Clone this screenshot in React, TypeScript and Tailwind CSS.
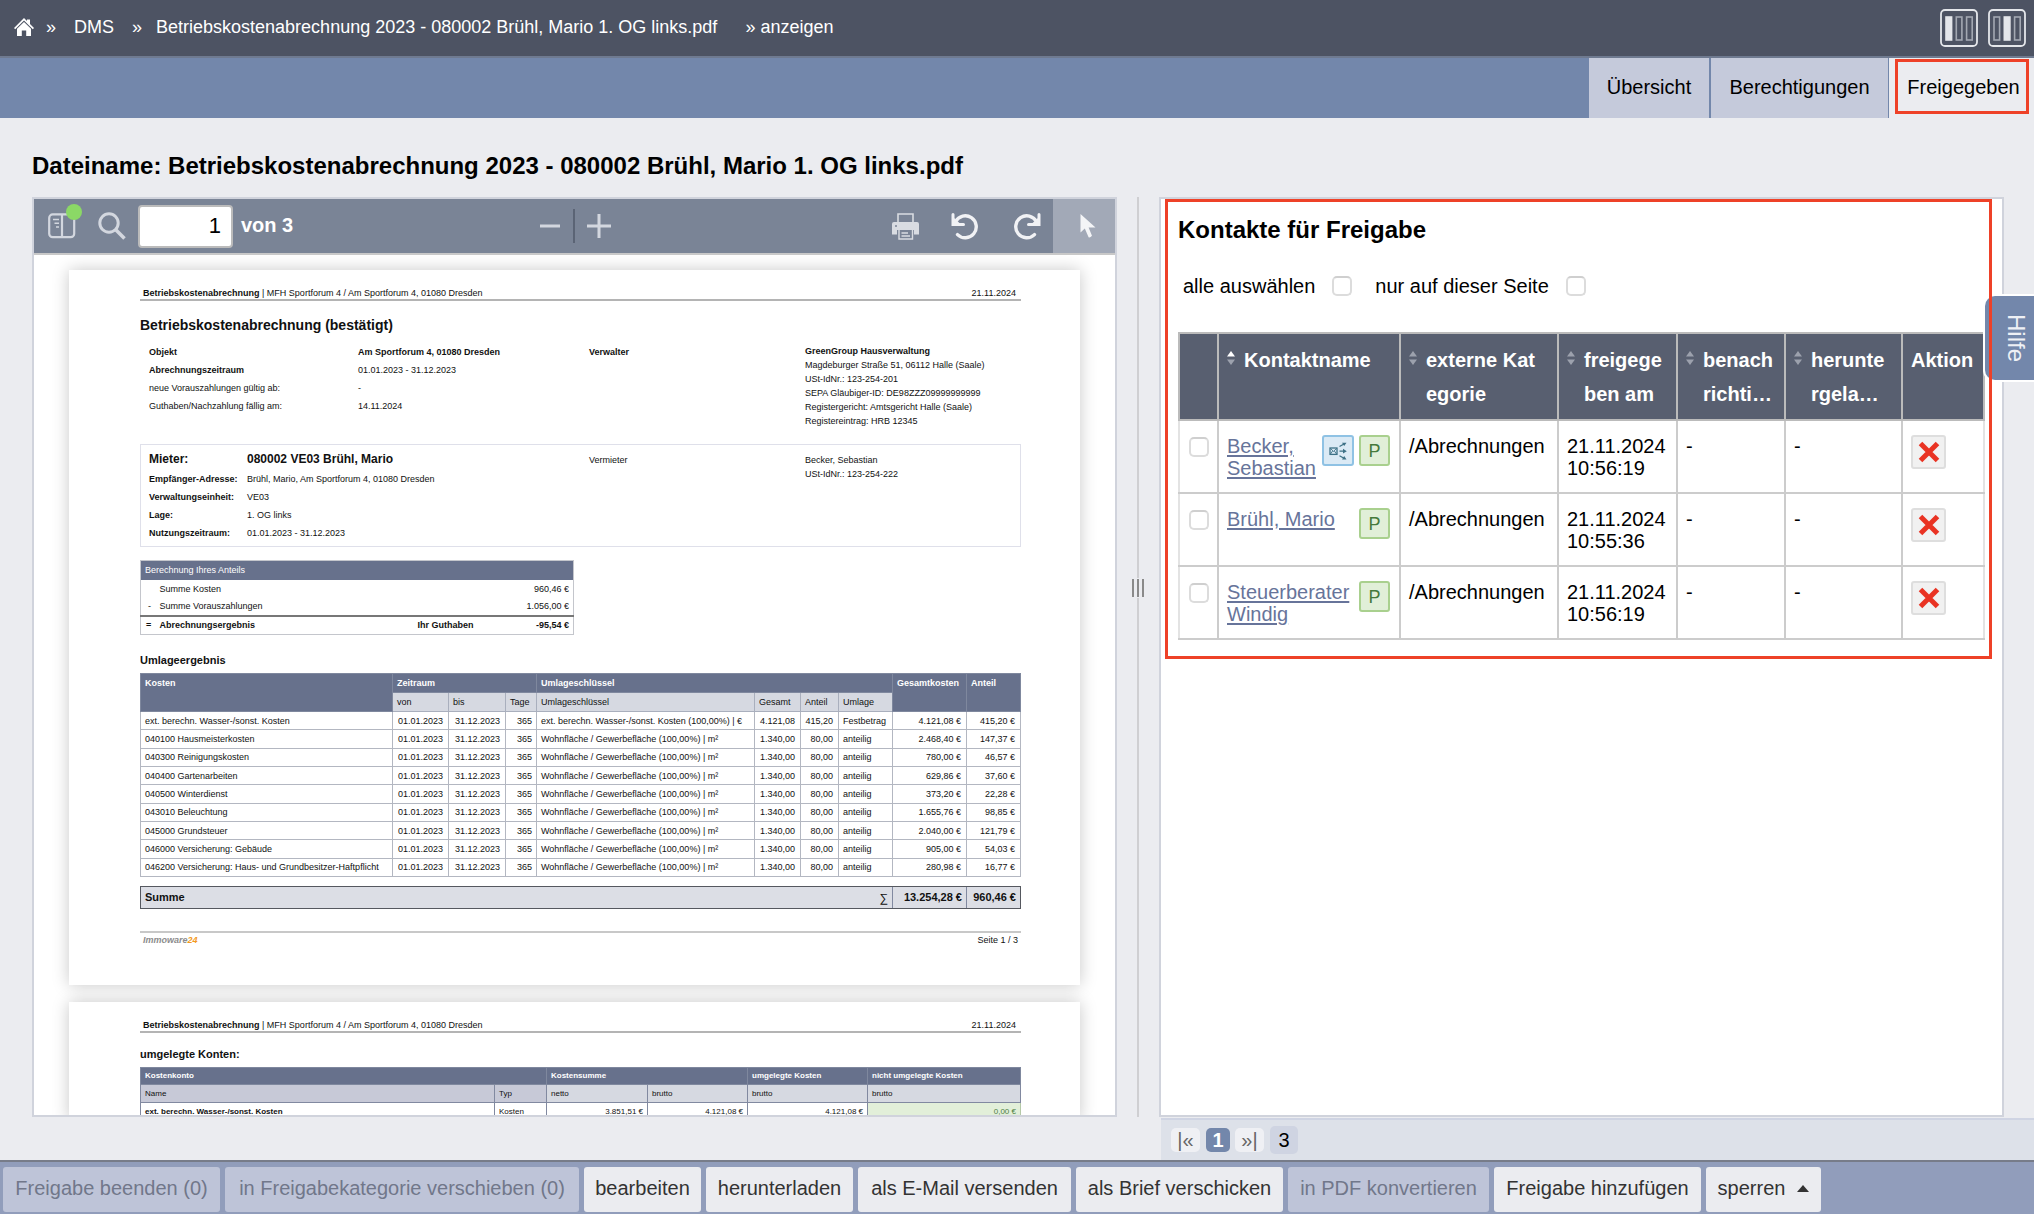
import { useState } from 'react';
import type { ReactNode } from 'react';
import clsx from 'clsx';

interface CostRow {
  name: string;
  key: string;
  total: string;
  share: string;
  mode: string;
  sum: string;
  part: string;
}

interface Contact {
  id: string;
  name: string;
  mail?: boolean;
  category: string;
  date: string;
  time: string;
}

const AREA_KEY = 'Wohnfläche / Gewerbefläche (100,00%) | m²';

const costRows: CostRow[] = [
  { name: 'ext. berechn. Wasser-/sonst. Kosten', key: 'ext. berechn. Wasser-/sonst. Kosten (100,00%) | €', total: '4.121,08', share: '415,20', mode: 'Festbetrag', sum: '4.121,08 €', part: '415,20 €' },
  { name: '040100 Hausmeisterkosten', key: AREA_KEY, total: '1.340,00', share: '80,00', mode: 'anteilig', sum: '2.468,40 €', part: '147,37 €' },
  { name: '040300 Reinigungskosten', key: AREA_KEY, total: '1.340,00', share: '80,00', mode: 'anteilig', sum: '780,00 €', part: '46,57 €' },
  { name: '040400 Gartenarbeiten', key: AREA_KEY, total: '1.340,00', share: '80,00', mode: 'anteilig', sum: '629,86 €', part: '37,60 €' },
  { name: '040500 Winterdienst', key: AREA_KEY, total: '1.340,00', share: '80,00', mode: 'anteilig', sum: '373,20 €', part: '22,28 €' },
  { name: '043010 Beleuchtung', key: AREA_KEY, total: '1.340,00', share: '80,00', mode: 'anteilig', sum: '1.655,76 €', part: '98,85 €' },
  { name: '045000 Grundsteuer', key: AREA_KEY, total: '1.340,00', share: '80,00', mode: 'anteilig', sum: '2.040,00 €', part: '121,79 €' },
  { name: '046000 Versicherung: Gebäude', key: AREA_KEY, total: '1.340,00', share: '80,00', mode: 'anteilig', sum: '905,00 €', part: '54,03 €' },
  { name: '046200 Versicherung: Haus- und Grundbesitzer-Haftpflicht', key: AREA_KEY, total: '1.340,00', share: '80,00', mode: 'anteilig', sum: '280,98 €', part: '16,77 €' },
];

const contacts: Contact[] = [
  { id: 'becker', name: 'Becker, Sebastian', mail: true, category: '/Abrechnungen', date: '21.11.2024', time: '10:56:19' },
  { id: 'bruehl', name: 'Brühl, Mario', category: '/Abrechnungen', date: '21.11.2024', time: '10:55:36' },
  { id: 'windig', name: 'Steuerberater Windig', category: '/Abrechnungen', date: '21.11.2024', time: '10:56:19' },
];

const sortableColumns = [
  { lines: ['Kontaktname'], active: true },
  { lines: ['externe Kat', 'egorie'] },
  { lines: ['freigege', 'ben am'] },
  { lines: ['benach', 'richti…'] },
  { lines: ['herunte', 'rgela…'] },
];

const actions = [
  { label: 'Freigabe beenden (0)', width: 'w-[217px]', disabled: true },
  { label: 'in Freigabekategorie verschieben (0)', width: 'w-[354px]', disabled: true },
  { label: 'bearbeiten', width: 'w-[117px]' },
  { label: 'herunterladen', width: 'w-[147px]' },
  { label: 'als E-Mail versenden', width: 'w-[213px]' },
  { label: 'als Brief verschicken', width: 'w-[207px]' },
  { label: 'in PDF konvertieren', width: 'w-[201px]', disabled: true },
  { label: 'Freigabe hinzufügen', width: 'w-[207px]' },
];

/* ---------- Icons ---------- */

function HomeIcon() {
  return (
    <svg viewBox="0 0 20 18" className="w-5 h-[18px]" fill="#fff">
      <path d="M10 0 L13 3 V1.6 H16 V6 L20 10 L18.8 11.2 L10 2.6 L1.2 11.2 L0 10 Z" />
      <path d="M10 4 L17 10.8 V18 H12.2 V12.5 H7.8 V18 H3 V10.8 Z" />
    </svg>
  );
}

function LayoutIcon({ active }: { active: number }) {
  return (
    <svg viewBox="0 0 38 38" className="w-[38px] h-[38px]">
      <rect x="1" y="1" width="36" height="36" rx="4" fill="none" stroke="#e4e6ea" strokeWidth="1.8" />
      {[0, 1, 2].map((i) => (
        <rect
          key={i}
          x={6 + i * 10.3}
          y="8"
          width="5.6"
          height="23"
          fill={i === active ? '#e4e6ea' : 'none'}
          stroke={i === active ? '#e4e6ea' : '#a3a8b2'}
          strokeWidth="1.6"
        />
      ))}
    </svg>
  );
}

function SidebarIcon() {
  return (
    <svg viewBox="0 0 28 26" className="w-7 h-[26px]" fill="none" stroke="#d3d7df" strokeWidth="2.2">
      <rect x="1.2" y="1.4" width="25" height="22.8" rx="3.5" />
      <path d="M14 1.4 V24" />
      <path d="M5 6.5 H11 M6.5 10.3 H11 M8 14 H11" strokeWidth="1.5" />
    </svg>
  );
}

function SearchIcon() {
  return (
    <svg viewBox="0 0 28 28" className="w-7 h-7" fill="none" stroke="#d3d7df">
      <circle cx="11" cy="11" r="9.2" strokeWidth="3" />
      <path d="M17.5 17.5 L26.5 26.5" strokeWidth="3.6" />
    </svg>
  );
}

function PrinterIcon() {
  return (
    <svg viewBox="0 0 27 27" className="w-[27px] h-[27px]">
      <path d="M6 9 V1 H21 V9" fill="none" stroke="#d9dce2" strokeWidth="1.6" />
      <path d="M2 9 H25 Q27 9 27 11 V21.5 H22 V17 H5 V21.5 H0 V11 Q0 9 2 9 Z" fill="#d9dce2" />
      <circle cx="4" cy="13" r="1" fill="#7a8496" />
      <path d="M7 17 V26 H20.5 V17" fill="none" stroke="#d9dce2" strokeWidth="1.4" />
      <path d="M9.5 20 H16 M9.5 23 H18" stroke="#d9dce2" strokeWidth="1.4" />
    </svg>
  );
}

function RotateIcon({ flip }: { flip?: boolean }) {
  return (
    <svg viewBox="0 0 27 27" className={clsx('w-[27px] h-[27px]', flip && '-scale-x-100')} fill="none" stroke="#f1f2f5">
      <path d="M4.6 8.5 A11 11 0 1 1 6.5 21.6" strokeWidth="3.4" strokeLinecap="round" />
      <path d="M2 1.5 V11.6 H12.5" strokeWidth="3" strokeLinecap="round" />
      <path d="M3 5 V10.5 H9 Z" fill="#f1f2f5" stroke="none" />
    </svg>
  );
}

function PointerIcon() {
  return (
    <svg viewBox="0 0 16 24" className="w-4 h-6" fill="#f4f5f7">
      <path d="M0.5 0 V18.5 L4.8 14.6 L8.6 23.2 Q10 24 12 21.8 L8.6 13.4 H15.5 Z" />
    </svg>
  );
}

function SortIcon({ active }: { active?: boolean }) {
  return (
    <svg viewBox="0 0 8 14" className="w-2 h-[14px] mt-2 shrink-0">
      <path d="M4 0 L8 5.5 H0 Z" fill={active ? '#fff' : '#9ca1ad'} />
      <path d="M0 8.5 H8 L4 14 Z" fill="#9ca1ad" />
    </svg>
  );
}

function DistributeIcon() {
  return (
    <svg viewBox="0 0 18 18" className="w-[18px] h-[18px]" fill="none" stroke="#3d7186" strokeWidth="1.3">
      <rect x="1" y="6" width="7" height="6.4" />
      <path d="M1.5 6.5 L4.5 9.4 L7.5 6.5 M1.5 12 L3.6 9 M7.5 12 L5.4 9" strokeWidth="0.9" />
      <path d="M10.5 4.5 L15 2 M10.5 9.2 H16 M10.5 13.8 L15 16.2" />
      <path d="M13 0.7 L17.5 0.7 L15.2 4 Z M14 6.8 L17.8 9.2 L14 11.6 Z M15.2 14 L17.5 17.6 L13 17.4 Z" fill="#3d7186" stroke="none" />
    </svg>
  );
}

function DeleteIcon() {
  return (
    <svg viewBox="0 0 22 22" className="w-[22px] h-[22px]">
      <path d="M2.5 2.5 L19.5 19.5 M19.5 2.5 L2.5 19.5" stroke="#e93323" strokeWidth="5" />
    </svg>
  );
}

/* ---------- Document preview ---------- */

function DocPage({ children }: { children: ReactNode }) {
  return (
    <article className="bg-white shadow-[0_0_16px_rgba(0,0,0,0.22)] pt-[17px] pl-[71px] pr-[59px]">
      <header className="flex justify-between pl-[3px] pr-[5px] text-[9px] leading-3 border-b-2 border-[#b4b4b4]">
        <p>
          <b>Betriebskostenabrechnung</b> | MFH Sportforum 4 / Am Sportforum 4, 01080 Dresden
        </p>
        <p>21.11.2024</p>
      </header>
      {children}
    </article>
  );
}

function StatementPage() {
  const dark = 'bg-[#67718c] text-white font-bold border border-[#7f889e]';
  const sub = 'bg-[#d6d9e1] font-normal border border-[#a9afbd]';
  const cell = 'border border-[#b3b7c1] pl-1 pr-[5px]';

  return (
    <DocPage>
      <h3 className="mt-[15px] text-sm leading-[18px] font-bold">Betriebskostenabrechnung (bestätigt)</h3>

      <div className="mt-[9px] grid grid-cols-[449px_216px_1fr] leading-[18px]">
        <dl className="grid grid-cols-[209px_1fr] pl-[9px] content-start">
          <dt className="font-bold">Objekt</dt>
          <dd className="font-bold">Am Sportforum 4, 01080 Dresden</dd>
          <dt className="font-bold">Abrechnungszeitraum</dt>
          <dd>01.01.2023 - 31.12.2023</dd>
          <dt>neue Vorauszahlungen gültig ab:</dt>
          <dd>-</dd>
          <dt>Guthaben/Nachzahlung fällig am:</dt>
          <dd>14.11.2024</dd>
        </dl>
        <p className="font-bold">Verwalter</p>
        <address className="not-italic leading-[14px] pt-px pb-px">
          <b>GreenGroup Hausverwaltung</b>
          <p>Magdeburger Straße 51, 06112 Halle (Saale)</p>
          <p>USt-IdNr.: 123-254-201</p>
          <p>SEPA Gläubiger-ID: DE98ZZZ09999999999</p>
          <p>Registergericht: Amtsgericht Halle (Saale)</p>
          <p>Registereintrag: HRB 12345</p>
        </address>
      </div>

      <div className="mt-[15px] grid grid-cols-[448px_216px_1fr] py-1 border border-[#dfe0ea]">
        <dl className="grid grid-cols-[98px_1fr] pl-2 leading-[18px]">
          <dt className="text-xs leading-[21px] font-bold">Mieter:</dt>
          <dd className="text-xs leading-[21px] font-bold">080002 VE03 Brühl, Mario</dd>
          <dt className="font-bold">Empfänger-Adresse:</dt>
          <dd>Brühl, Mario, Am Sportforum 4, 01080 Dresden</dd>
          <dt className="font-bold">Verwaltungseinheit:</dt>
          <dd>VE03</dd>
          <dt className="font-bold">Lage:</dt>
          <dd>1. OG links</dd>
          <dt className="font-bold">Nutzungszeitraum:</dt>
          <dd>01.01.2023 - 31.12.2023</dd>
        </dl>
        <p className="pt-1 leading-[14px]">Vermieter</p>
        <address className="pt-1 leading-[14px] not-italic">
          <p>Becker, Sebastian</p>
          <p>USt-IdNr.: 123-254-222</p>
        </address>
      </div>

      <table className="mt-[13px] w-[434px] table-fixed border border-[#c4c6cc] border-collapse leading-[14px]">
        <colgroup>
          <col className="w-[19px]" />
          <col />
          <col className="w-[80px]" />
          <col className="w-[76px]" />
        </colgroup>
        <thead>
          <tr className="h-[19px] bg-[#67718c] text-white">
            <th colSpan={4} className="px-1 text-left font-normal">Berechnung Ihres Anteils</th>
          </tr>
        </thead>
        <tbody>
          <tr className="h-[18px]">
            <td />
            <td colSpan={2}>Summe Kosten</td>
            <td className="pr-1 text-right">960,46 €</td>
          </tr>
          <tr className="h-[18px]">
            <td className="pl-[7px]">-</td>
            <td colSpan={2}>Summe Vorauszahlungen</td>
            <td className="pr-1 text-right">1.056,00 €</td>
          </tr>
          <tr className="h-[19px] font-bold border-t-2 border-[#777]">
            <td className="pl-[5px]">=</td>
            <td>Abrechnungsergebnis</td>
            <td>Ihr Guthaben</td>
            <td className="pr-1 text-right">-95,54 €</td>
          </tr>
        </tbody>
      </table>

      <h4 className="mt-[17px] text-[11px] leading-4 font-bold">Umlageergebnis</h4>
      <table className="mt-[5px] w-full h-[204px] table-fixed border-collapse leading-[14px] text-left">
        <colgroup>
          <col />
          <col className="w-[56px]" />
          <col className="w-[57px]" />
          <col className="w-[31px]" />
          <col className="w-[218px]" />
          <col className="w-[46px]" />
          <col className="w-[38px]" />
          <col className="w-[54px]" />
          <col className="w-[74px]" />
          <col className="w-[54px]" />
        </colgroup>
        <thead>
          <tr className="h-[19px]">
            <th rowSpan={2} className={clsx(dark, 'px-1 pt-0.5 align-top')}>Kosten</th>
            <th colSpan={3} className={clsx(dark, 'px-1')}>Zeitraum</th>
            <th colSpan={4} className={clsx(dark, 'px-1')}>Umlageschlüssel</th>
            <th rowSpan={2} className={clsx(dark, 'px-1 pt-0.5 align-top')}>Gesamtkosten</th>
            <th rowSpan={2} className={clsx(dark, 'px-1 pt-0.5 align-top')}>Anteil</th>
          </tr>
          <tr className="h-[19px]">
            <th className={clsx(sub, 'px-1')}>von</th>
            <th className={clsx(sub, 'px-1')}>bis</th>
            <th className={clsx(sub, 'px-1')}>Tage</th>
            <th className={clsx(sub, 'px-1')}>Umlageschlüssel</th>
            <th className={clsx(sub, 'px-1')}>Gesamt</th>
            <th className={clsx(sub, 'px-1')}>Anteil</th>
            <th className={clsx(sub, 'px-1')}>Umlage</th>
          </tr>
        </thead>
        <tbody>
          {costRows.map((row) => (
            <tr key={row.name} className="whitespace-nowrap">
              <td className={cell}>{row.name}</td>
              <td className="border border-[#b3b7c1] border-l-[#8189a0] pr-[5px] text-right">01.01.2023</td>
              <td className="border border-[#b3b7c1] pr-[5px] text-right">31.12.2023</td>
              <td className="border border-[#b3b7c1] pr-1 text-right">365</td>
              <td className="border border-[#b3b7c1] border-l-[#8189a0] px-1">{row.key}</td>
              <td className={clsx(cell, 'text-right')}>{row.total}</td>
              <td className={clsx(cell, 'text-right')}>{row.share}</td>
              <td className="border border-[#b3b7c1] px-1">{row.mode}</td>
              <td className={clsx(cell, 'text-right')}>{row.sum}</td>
              <td className={clsx(cell, 'text-right')}>{row.part}</td>
            </tr>
          ))}
        </tbody>
      </table>

      <div className="mt-[9px] flex h-[23px] items-center border border-[#55585f] bg-[#dcdee5] text-[11px] font-bold">
        <span className="grow pl-1">Summe</span>
        <span className="pr-1 text-xs font-normal">∑</span>
        <span className="w-[74px] h-full flex items-center justify-end pr-1 border-l border-[#8189a0]">13.254,28 €</span>
        <span className="w-[54px] h-full flex items-center justify-end pr-1 border-l border-[#8189a0]">960,46 €</span>
      </div>

      <footer className="mt-[22px] pb-[38px] flex justify-between pl-[3px] pr-[3px] border-t-2 border-[#c8c8c8] leading-[14px]">
        <p className="font-bold italic text-[#8c8c8c]">
          Immoware<span className="text-[#f39a1f]">24</span>
        </p>
        <p>Seite 1 / 3</p>
      </footer>
    </DocPage>
  );
}

function AccountsPage() {
  const dark = 'border border-[#7f889e] px-1';
  const sub = 'border border-[#8189a0] px-1 font-normal';
  return (
    <DocPage>
      <h4 className="mt-[13px] text-[11px] leading-4 font-bold">umgelegte Konten:</h4>
      <table className="mt-[5px] w-full table-fixed border-collapse text-[8px] leading-3 text-left">
        <colgroup>
          <col />
          <col className="w-[52px]" />
          <col className="w-[101px]" />
          <col className="w-[100px]" />
          <col className="w-[120px]" />
          <col className="w-[153px]" />
        </colgroup>
        <thead>
          <tr className="h-[17px] bg-[#67718c] text-white">
            <th colSpan={2} className={dark}>Kostenkonto</th>
            <th colSpan={2} className={dark}>Kostensumme</th>
            <th className={dark}>umgelegte Kosten</th>
            <th className={dark}>nicht umgelegte Kosten</th>
          </tr>
          <tr className="h-[18px] bg-[#d6d9e1]">
            <th className={clsx(sub, 'bg-[#c7c9d7]')}>Name</th>
            <th className={clsx(sub, 'bg-[#c7c9d7]')}>Typ</th>
            <th className={sub}>netto</th>
            <th className={sub}>brutto</th>
            <th className={sub}>brutto</th>
            <th className={sub}>brutto</th>
          </tr>
        </thead>
        <tbody>
          <tr className="h-[18px]">
            <td className="border border-[#8189a0] px-1 font-bold">ext. berechn. Wasser-/sonst. Kosten</td>
            <td className="border border-[#8189a0] px-1">Kosten</td>
            <td className="border border-[#8189a0] px-1 text-right">3.851,51 €</td>
            <td className="border border-[#8189a0] px-1 text-right">4.121,08 €</td>
            <td className="border border-[#8189a0] px-1 text-right">4.121,08 €</td>
            <td className="border border-[#b5c9a8] px-1 text-right bg-[#e2efd9] text-[#4d8043]">0,00 €</td>
          </tr>
        </tbody>
      </table>
    </DocPage>
  );
}

function Viewer() {
  const [page, setPage] = useState('1');

  return (
    <section className="grow min-h-0 flex flex-col border-2 border-[#d0d3dc] bg-white overflow-hidden">
      <div className="shrink-0 h-14 flex bg-[#7a8496] border-b-2 border-[#c8c8c8]">
        <div className="flex items-center pl-3.5">
          <button type="button" aria-label="Seitenleiste" className="relative mr-[22px]">
            <SidebarIcon />
            <span className="absolute -top-[9px] -right-1.5 w-4 h-4 rounded-full bg-[#8bd866]" />
          </button>
          <button type="button" aria-label="Suchen" className="mr-3">
            <SearchIcon />
          </button>
          <input
            aria-label="Seite"
            value={page}
            onChange={(e) => setPage(e.target.value)}
            className="w-[95px] h-[43px] pr-2.5 rounded-sm border-2 border-[#bbb] bg-white text-[22px] text-right"
          />
          <span className="ml-2 pb-0.5 text-xl font-bold text-white">von 3</span>
        </div>
        <div className="grow flex items-center justify-center pr-9">
          <button type="button" aria-label="Verkleinern" className="p-3">
            <svg viewBox="0 0 22 24" className="w-[22px] h-6"><path d="M1 12 H21" stroke="#d3d7df" strokeWidth="3" /></svg>
          </button>
          <span className="w-0.5 h-[34px] bg-[#5b6475]" />
          <button type="button" aria-label="Vergrößern" className="p-3">
            <svg viewBox="0 0 24 24" className="w-6 h-6"><path d="M0 12 H24 M12 0 V24" stroke="#d3d7df" strokeWidth="3" /></svg>
          </button>
        </div>
        <div className="flex items-center">
          <button type="button" aria-label="Drucken" className="mr-8"><PrinterIcon /></button>
          <button type="button" aria-label="Gegen den Uhrzeigersinn drehen" className="mr-9"><RotateIcon /></button>
          <button type="button" aria-label="Im Uhrzeigersinn drehen" className="mr-3"><RotateIcon flip /></button>
          <button type="button" aria-label="Auswahl" className="w-[62px] h-full pl-2 flex items-center justify-center bg-[#a2a9b7]">
            <PointerIcon />
          </button>
        </div>
      </div>
      <div className="grow min-h-0 overflow-hidden flex flex-col gap-[17px] pt-[15px] px-[35px] text-[9px] text-[#111]">
        <StatementPage />
        <AccountsPage />
      </div>
    </section>
  );
}

/* ---------- Contacts ---------- */

function Tick({ id, label }: { id: string; label?: string }) {
  return (
    <input
      id={id}
      type="checkbox"
      aria-label={label}
      className="block appearance-none w-5 h-5 rounded-[5px] border-2 border-[#dcdcdc] border-t-[#cfcfcf] bg-white checked:bg-[#7387ab]"
    />
  );
}

function ContactTable() {
  const td = 'border-2 border-[#ccc] pt-[14px] pl-2 pr-[9px] align-top';
  return (
    <table className="w-full table-fixed border-collapse text-xl">
      <colgroup>
        <col className="w-[39px]" />
        <col className="w-[182px]" />
        <col className="w-[158px]" />
        <col className="w-[119px]" />
        <col className="w-[108px]" />
        <col className="w-[117px]" />
        <col />
      </colgroup>
      <thead>
        <tr className="h-[87px] bg-[#585f70] text-white text-left">
          <th className="border-2 border-[#bbb]" aria-label="Auswahl" />
          {sortableColumns.map((col) => (
            <th key={col.lines[0]} className="border-2 border-[#bbb] pt-[9px] pl-2 align-top">
              <div className="flex gap-[9px] leading-[34px] whitespace-nowrap">
                <SortIcon active={col.active} />
                <span>
                  {col.lines.map((line) => (
                    <span key={line} className="block">{line}</span>
                  ))}
                </span>
              </div>
            </th>
          ))}
          <th className="border-2 border-[#bbb] pt-[9px] pl-2 align-top leading-[34px]">Aktion</th>
        </tr>
      </thead>
      <tbody className="leading-[22px]">
        {contacts.map((contact) => (
          <tr key={contact.id} className="h-[73px]">
            <td className="border-2 border-[#ccc] border-l-[#e3e3e3] pt-4 pl-[9px] align-top">
              <Tick id={contact.id} label={contact.name} />
            </td>
            <td className={td}>
              <div className="flex gap-[5px]">
                <a href="#" className="grow min-w-0 text-[#67749a] underline underline-offset-2 decoration-2">{contact.name}</a>
                {contact.mail && (
                  <span className="shrink-0 w-8 h-[31px] flex items-center justify-center rounded-[3px] border-2 border-[#8fc2e4] bg-[#dbeaf5]">
                    <DistributeIcon />
                  </span>
                )}
                <span className="shrink-0 w-[31px] h-[31px] flex items-center justify-center rounded-[3px] border-2 border-[#a9d08e] bg-[#e1efd8] text-lg text-[#467a3c]">
                  P
                </span>
              </div>
            </td>
            <td className={td}>{contact.category}</td>
            <td className={td}>
              {contact.date}
              <br />
              {contact.time}
            </td>
            <td className={td}>-</td>
            <td className={td}>-</td>
            <td className="border-2 border-[#ccc] border-r-[#e3e3e3] pt-[14px] pl-2 align-top">
              <button
                type="button"
                aria-label="Freigabe entfernen"
                className="w-[35px] h-[34px] flex items-center justify-center rounded-[3px] border-2 border-[#dedede] bg-[#f1f1f1]"
              >
                <DeleteIcon />
              </button>
            </td>
          </tr>
        ))}
      </tbody>
    </table>
  );
}

function ContactsPanel() {
  return (
    <section className="grow min-h-0 mr-[30px] pl-1 pr-2.5 border-2 border-[#d0d3dc] bg-white">
      <div className="relative pt-[15px] pl-[13px] pr-[7px] pb-[19px]">
        <span className="absolute inset-0 z-20 border-[3px] border-[#ee4128] pointer-events-none" />
        <h2 className="text-2xl leading-8 font-bold">Kontakte für Freigabe</h2>
        <div className="mt-[29px] mb-[35px] pl-[5px] flex items-center text-xl leading-[22px]">
          <label htmlFor="select-all" className="mr-[17px]">alle auswählen</label>
          <Tick id="select-all" />
          <label htmlFor="select-page" className="ml-[23px] mr-[17px]">nur auf dieser Seite</label>
          <Tick id="select-page" />
        </div>
        <ContactTable />
      </div>
    </section>
  );
}

function Pagination() {
  const arrow = 'w-[29px] h-6 rounded-[5px] bg-[#eff0f4] text-[#666]';
  return (
    <nav className="shrink-0 mt-px ml-0.5 h-[42px] pl-2.5 flex items-center border-t-2 border-[#cfd4e3] bg-[#dde1e9] text-xl leading-6">
      <button type="button" className={clsx(arrow, 'mr-1.5')}>|«</button>
      <button type="button" className="w-6 h-6 mr-[5px] rounded-[5px] bg-[#7387ab] text-white font-bold">1</button>
      <button type="button" className={clsx(arrow, 'mr-1.5')}>»|</button>
      <span className="w-7 h-7 rounded-[5px] bg-[#cfd4e2] text-center leading-7">3</span>
    </nav>
  );
}

/* ---------- Page ---------- */

export default function App() {
  return (
    <div className="h-screen flex flex-col overflow-hidden bg-[#ebecf0] text-black font-['Liberation_Sans',Arial,sans-serif]">
      <header className="shrink-0 h-[58px] flex items-center justify-between pl-3.5 pr-2 bg-[#4d5363] border-b-2 border-[#6f7a90] text-white">
        <nav aria-label="Pfad" className="flex items-center pb-0.5 text-lg whitespace-pre">
          <a href="#" aria-label="Startseite"><HomeIcon /></a>
          <span className="ml-3">»</span>
          <a href="#" className="ml-[18px]">DMS</a>
          <span className="ml-[18px]">»</span>
          <a href="#" className="ml-3.5">Betriebskostenabrechnung 2023 - 080002 Brühl, Mario 1. OG links.pdf</a>
          <span className="ml-7">» anzeigen</span>
        </nav>
        <div className="flex gap-2.5">
          <button type="button" aria-label="Linke Spalte"><LayoutIcon active={0} /></button>
          <button type="button" aria-label="Mittlere Spalte"><LayoutIcon active={1} /></button>
        </div>
      </header>

      <nav aria-label="Reiter" className="shrink-0 h-[60px] flex justify-end bg-[#7387ab] text-xl">
        <a href="#" className="w-[120px] mr-0.5 pb-0.5 flex items-center justify-center bg-[#c5cadb]">Übersicht</a>
        <a href="#" className="w-[177px] mr-px pb-0.5 flex items-center justify-center bg-[#c5cadb]">Berechtigungen</a>
        <a href="#" aria-current="page" className="relative w-[145px] pb-0.5 pl-1 flex items-center justify-center bg-[#ebecf0]">
          <span className="absolute top-px bottom-1 left-1.5 right-[5px] border-[3px] border-[#ee4128]" />
          Freigegeben
        </a>
      </nav>

      <main className="grow min-h-0 flex flex-col pl-8 pt-8">
        <h1 className="mb-[15px] text-2xl leading-8 font-bold">
          Dateiname: Betriebskostenabrechnung 2023 - 080002 Brühl, Mario 1. OG links.pdf
        </h1>
        <div className="grow min-h-0 flex">
          <div className="grow-[1085] basis-0 min-w-0 flex flex-col pb-[43px]">
            <Viewer />
          </div>
          <div className="shrink-0 w-[42px] flex flex-col items-center pb-[43px]">
            <span className="w-0.5 grow basis-0 bg-[#cfcfd2]" />
            <span className="flex gap-[3px] h-[18px] my-px">
              <span className="w-0.5 bg-[#8a8a8a]" />
              <span className="w-0.5 bg-[#8a8a8a]" />
              <span className="w-0.5 bg-[#8a8a8a]" />
            </span>
            <span className="w-0.5 grow-[1.36] basis-0 bg-[#cfcfd2]" />
          </div>
          <div className="grow-[875] basis-0 min-w-0 flex flex-col">
            <ContactsPanel />
            <Pagination />
          </div>
        </div>
      </main>

      <footer className="shrink-0 flex gap-[5px] px-[3px] pt-[5px] pb-0.5 border-t-2 border-[#777c89] bg-[#919dbb] text-xl">
        {actions.map((action) => (
          <button
            key={action.label}
            type="button"
            disabled={action.disabled}
            className={clsx(
              'h-[45px] pb-[3px] rounded-[3px] whitespace-nowrap',
              action.width,
              action.disabled ? 'bg-[#bec4d8] text-[#71778a]' : 'bg-[#ebecf0] text-[#333]',
            )}
          >
            {action.label}
          </button>
        ))}
        <button type="button" className="h-[45px] w-[115px] pb-[3px] flex items-center justify-center gap-3 rounded-[3px] bg-[#ebecf0] text-[#333]">
          sperren
          <svg viewBox="0 0 12 7" className="w-3 h-[7px]" fill="#333"><path d="M6 0 L12 7 H0 Z" /></svg>
        </button>
      </footer>

      <button
        type="button"
        className="fixed right-0 top-[294px] z-10 w-[51px] h-[88px] pl-3 flex items-center justify-center rounded-l-xl border-2 border-r-0 border-white bg-[#7387ab] text-2xl text-[#eef0f5] [writing-mode:vertical-rl]"
      >
        Hilfe
      </button>
    </div>
  );
}
